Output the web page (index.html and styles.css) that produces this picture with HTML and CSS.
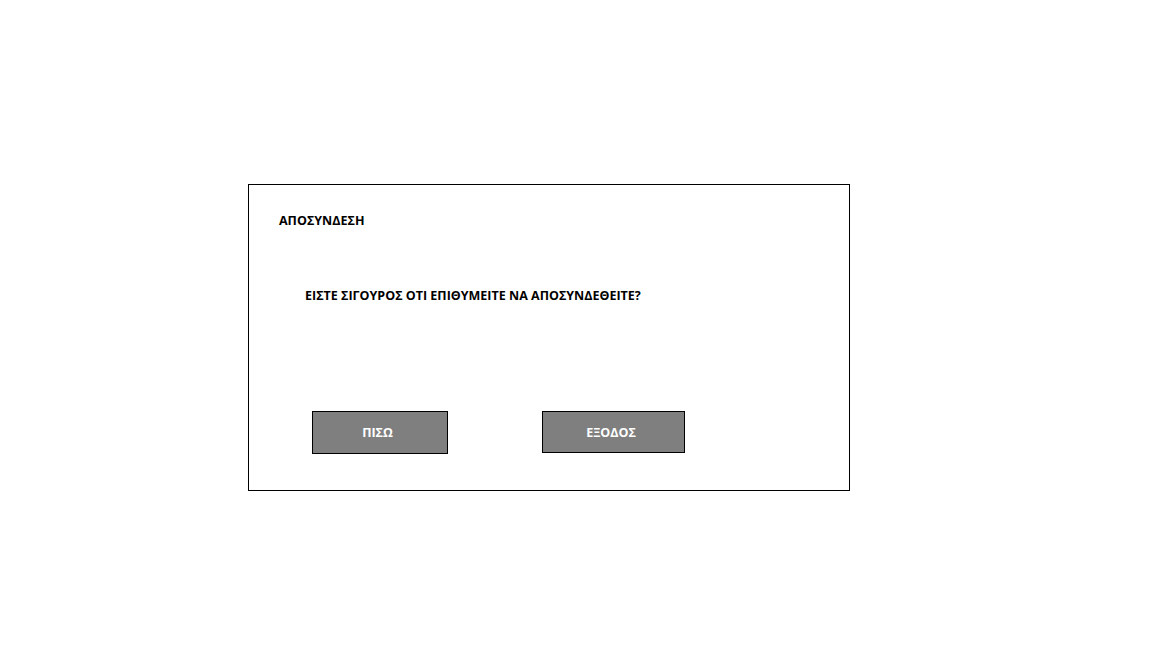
FILE: index.html
```html
<!DOCTYPE html>
<html lang="el">
<head>
<meta charset="utf-8">
<title>ΑΠΟΣΥΝΔΕΣΗ</title>
<link rel="stylesheet" href="styles.css">
</head>
<body>
<div class="dialog">
  <div class="title">ΑΠΟΣΥΝΔΕΣΗ</div>
  <div class="question">ΕΙΣΤΕ ΣΙΓΟΥΡΟΣ ΟΤΙ ΕΠΙΘΥΜΕΙΤΕ ΝΑ ΑΠΟΣΥΝΔΕΘΕΙΤΕ?</div>
  <div class="actions">
    <button class="btn btn-back">ΠΙΣΩ</button>
    <button class="btn btn-exit">ΕΞΟΔΟΣ</button>
  </div>
</div>
</body>
</html>
```
FILE: styles.css
```css
html, body {
  margin: 0;
  padding: 0;
  background: #ffffff;
}
body {
  font-family: "Open Sans", "Noto Sans", sans-serif;
  color: #000;
  padding: 184px 0 0 248px;
}
.dialog {
  box-sizing: border-box;
  width: 602px;
  height: 307px;
  border: 1px solid #000;
  padding: 28px 0 0 30px;
  display: flex;
  flex-direction: column;
}
.title {
  font-size: 12.5px;
  font-weight: 700;
  line-height: 16px;
}
.question {
  font-size: 12.5px;
  font-weight: 700;
  line-height: 16px;
  margin: 59px 0 0 26px;
}
.actions {
  display: flex;
  align-items: flex-start;
  margin: 107px 0 0 33px;
}
.btn {
  box-sizing: border-box;
  background: #7f7f7f;
  color: #ffffff;
  border: 1px solid #000;
  font-family: "Open Sans", "Noto Sans", sans-serif;
  font-size: 12.5px;
  font-weight: 700;
  padding: 0;
  margin: 0;
  border-radius: 0;
}
.btn-back {
  width: 136px;
  height: 43px;
  padding-right: 5px;
}
.btn-exit {
  width: 143px;
  height: 42px;
  margin-left: 94px;
  padding-right: 5px;
}
```
